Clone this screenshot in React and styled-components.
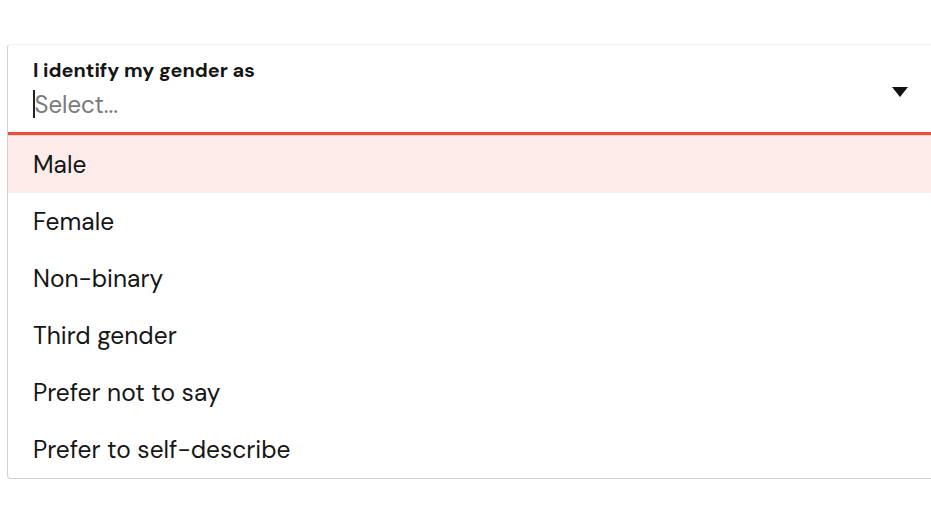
import React from "react";
import styled, { createGlobalStyle } from "styled-components";

const Global = createGlobalStyle`
  html, body { margin: 0; padding: 0; background: #ffffff; }
  body { font-family: "DM Sans", Inter, "Noto Sans", sans-serif; overflow: hidden; }
`;

const Page = styled.div`
  width: 931px;
  height: 523px;
  padding: 44px 0 0 7px;
  box-sizing: border-box;
  overflow: hidden;
`;

const Select = styled.div`
  width: 940px;
  border: 1px solid #cfcfcf;
  border-top-color: #f2f2f2;
  border-radius: 4px;
  background: #fff;
  box-sizing: border-box;
`;

const Control = styled.div`
  display: flex;
  align-items: center;
  justify-content: space-between;
  height: 90px;
  padding: 0 21px 0 25px;
  box-sizing: border-box;
  border-bottom: 3px solid #ec4c3c;
  margin-bottom: 1px;
  box-shadow: 0 1px 0 #d8d8d8;
`;

const Field = styled.div`
  display: flex;
  flex-direction: column;
  gap: 5px;
`;

const Label = styled.div`
  font-size: 19.9px;
  font-weight: 700;
  color: #151515;
  line-height: 26px;
`;

const Input = styled.div`
  display: flex;
  align-items: center;
  font-size: 24px;
  color: #7a7a7a;
  height: 32px;
`;

const Caret = styled.span`
  display: inline-block;
  width: 1.5px;
  height: 28px;
  background: #222;
`;

const Arrow = styled.svg`
  width: 16px;
  height: 10px;
  margin-top: 6px;
  margin-right: 17px;
`;

const Menu = styled.ul`
  list-style: none;
  margin: 0;
  padding: 0;
`;

const Option = styled.li`
  height: 57px;
  display: flex;
  align-items: center;
  padding-left: 25px;
  font-size: 24.5px;
  color: #161616;
  background: ${(p) => (p.$active ? "#feecea" : "transparent")};
`;

const options = [
  "Male",
  "Female",
  "Non-binary",
  "Third gender",
  "Prefer not to say",
  "Prefer to self-describe",
];

export default function App() {
  return (
    <>
      <Global />
      <Page>
        <Select>
          <Control>
            <Field>
              <Label>I identify my gender as</Label>
              <Input>
                <Caret />
                Select...
              </Input>
            </Field>
            <Arrow viewBox="0 0 16 10">
              <path d="M0 0 H16 L8 10 Z" fill="#111" />
            </Arrow>
          </Control>
          <Menu>
            {options.map((o, i) => (
              <Option key={o} $active={i === 0}>
                {o}
              </Option>
            ))}
          </Menu>
        </Select>
      </Page>
    </>
  );
}
